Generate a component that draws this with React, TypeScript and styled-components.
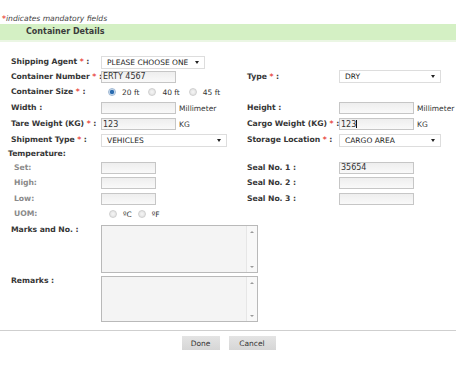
import styled, { createGlobalStyle } from "styled-components";

const GlobalStyle = createGlobalStyle`
  body {
    margin: 0;
    background: #ffffff;
    font-family: "DejaVu Sans", Verdana, sans-serif;
  }
`;

const Page = styled.div`
  width: 456px;
  padding: 13px 0px 0px 0px;
  color: #333333;
`;

const Note = styled.div`
  height: 11px;
  line-height: 11px;
  padding: 0px 0px 0px 2px;
  font-size: 7.6px;
  font-style: italic;
  color: #444444;
`;

const Star = styled.span`
  color: #e8463c;
  font-style: normal;
  font-weight: bold;
`;

const Header = styled.div`
  height: 16px;
  line-height: 16px;
  padding: 0px 0px 0px 26px;
  background-color: #d4f0c4;
  border-bottom: solid 2px #ebf6e4;
  font-size: 8px;
  font-weight: bold;
  color: #3b3b3b;
`;

const Form = styled.div`
  display: flex;
  flex-direction: column;
  margin: 13px 0px 0px 0px;
  padding: 0px 0px 0px 11px;
`;

const Row = styled.div<{ $h: number; $top?: boolean; $gap?: number }>`
  display: grid;
  grid-template-columns: 90px 146px 92px 1fr;
  align-items: ${(props) => (props.$top ? "start" : "center")};
  height: ${(props) => props.$h}px;
  margin: ${(props) => props.$gap ?? 0}px 0px 0px 0px;
`;

const Label = styled.div<{ $muted?: boolean; $shift?: number }>`
  font-size: 7.7px;
  line-height: 10px;
  font-weight: bold;
  letter-spacing: -0.05px;
  white-space: nowrap;
  color: ${(props) => (props.$muted ? "#8a8a8a" : "#363636")};
  margin: 0px 0px 0px ${(props) => props.$shift ?? 0}px;
`;

const Field = styled.div`
  display: flex;
  align-items: center;
  gap: 3px;
`;

const TextInput = styled.input<{ $w: number }>`
  box-sizing: border-box;
  width: ${(props) => props.$w}px;
  height: 12px;
  margin: 0px;
  padding: 0px 1px;
  border: solid 1px #c6c6c6;
  background: linear-gradient(#eeeeee, #f9f9f9);
  font-family: inherit;
  font-size: 8px;
  color: #333333;
  outline: none;
`;

const Unit = styled.span`
  font-size: 7.5px;
  color: #333333;
`;

const SelectBox = styled.div<{ $w: number }>`
  box-sizing: border-box;
  display: flex;
  align-items: center;
  justify-content: space-between;
  width: ${(props) => props.$w}px;
  height: 13px;
  padding: 0px 5px 0px 5px;
  border: solid 1px #dddddd;
  background-color: #ffffff;
  font-size: 7.5px;
  color: #222222;
`;

const Arrow = styled.span`
  width: 0px;
  height: 0px;
  border-left: solid 2.5px transparent;
  border-right: solid 2.5px transparent;
  border-top: solid 3px #222222;
`;

const RadioGroup = styled.div<{ $start: number }>`
  display: flex;
  align-items: center;
  margin: 0px 0px 0px ${(props) => props.$start}px;
`;

const Radio = styled.span<{ $checked?: boolean }>`
  box-sizing: border-box;
  width: 8px;
  height: 8px;
  border-radius: 50%;
  border: solid 1px ${(props) => (props.$checked ? "#9fb8d3" : "#d0d0d0")};
  background: ${(props) =>
    props.$checked
      ? "radial-gradient(circle, #2b6cb0 0px, #2b6cb0 1.8px, #cfe0f1 2.6px)"
      : "radial-gradient(circle, #f6f6f6 0px, #dedede 4px)"};
`;

const RadioText = styled.span<{ $gap: number }>`
  margin: 0px ${(props) => props.$gap}px 0px 6px;
  font-size: 7.5px;
  color: #333333;
`;

const TextArea = styled.div<{ $h: number }>`
  box-sizing: border-box;
  display: flex;
  justify-content: flex-end;
  width: 157px;
  height: ${(props) => props.$h}px;
  border: solid 1px #b9b9b9;
  background-color: #f4f4f4;
`;

const ScrollBar = styled.div`
  display: flex;
  flex-direction: column;
  justify-content: space-between;
  align-items: center;
  width: 10px;
  padding: 5px 0px 4px 0px;
  border-left: solid 1px #e6e6e6;
  background-color: #f8f8f8;
`;

const ScrollArrow = styled.span<{ $up?: boolean }>`
  width: 0px;
  height: 0px;
  border-left: solid 2px transparent;
  border-right: solid 2px transparent;
  border-${(props) => (props.$up ? "bottom" : "top")}: solid 2px #9a9a9a;
`;

const Caret = styled.span`
  display: inline-block;
  width: 1px;
  height: 8px;
  background-color: #111111;
`;

const FakeInput = styled.div<{ $w: number }>`
  box-sizing: border-box;
  display: flex;
  align-items: center;
  width: ${(props) => props.$w}px;
  height: 12px;
  padding: 0px 1px;
  border: solid 1px #c6c6c6;
  background: linear-gradient(#eeeeee, #f9f9f9);
  font-size: 8px;
  color: #333333;
`;

const Divider = styled.div`
  margin: 8px 0px 0px 0px;
  border-top: solid 1px #cfcfcf;
`;

const Buttons = styled.div`
  display: flex;
  justify-content: center;
  gap: 9px;
  margin: 5px 0px 0px 0px;
  padding: 0px 0px 0px 1px;
`;

const Button = styled.button<{ $w: number }>`
  width: ${(props) => props.$w}px;
  height: 14px;
  padding: 0px;
  border: none;
  background: linear-gradient(#e4e4e4, #d6d6d6);
  font-family: inherit;
  font-size: 7.5px;
  color: #333333;
`;

function Req({ text }: { text: string }) {
  return (
    <Label>
      {text} <Star>*</Star> :
    </Label>
  );
}

export default function App() {
  return (
    <Page>
      <GlobalStyle />
      <Note>
        <Star>*</Star>indicates mandatory fields
      </Note>
      <Header>Container Details</Header>
      <Form>
        <Row $h={14}>
          <Req text="Shipping Agent" />
          <Field>
            <SelectBox $w={104}>
              PLEASE CHOOSE ONE <Arrow />
            </SelectBox>
          </Field>
        </Row>
        <Row $h={15}>
          <Req text="Container Number" />
          <Field>
            <TextInput $w={75} readOnly value="ERTY 4567" />
          </Field>
          <Req text="Type" />
          <Field>
            <SelectBox $w={102}>
              DRY <Arrow />
            </SelectBox>
          </Field>
        </Row>
        <Row $h={16}>
          <Req text="Container Size" />
          <RadioGroup $start={7}>
            <Radio $checked />
            <RadioText $gap={9}>20 ft</RadioText>
            <Radio />
            <RadioText $gap={9}>40 ft</RadioText>
            <Radio />
            <RadioText $gap={0}>45 ft</RadioText>
          </RadioGroup>
        </Row>
        <Row $h={16}>
          <Label>Width :</Label>
          <Field>
            <TextInput $w={75} readOnly value="" />
            <Unit>Millimeter</Unit>
          </Field>
          <Label>Height :</Label>
          <Field>
            <TextInput $w={75} readOnly value="" />
            <Unit>Millimeter</Unit>
          </Field>
        </Row>
        <Row $h={16}>
          <Req text="Tare Weight (KG)" />
          <Field>
            <TextInput $w={75} readOnly value="123" />
            <Unit>KG</Unit>
          </Field>
          <Req text="Cargo Weight (KG)" />
          <Field>
            <FakeInput $w={75}>
              123
              <Caret />
            </FakeInput>
            <Unit>KG</Unit>
          </Field>
        </Row>
        <Row $h={16}>
          <Req text="Shipment Type" />
          <Field>
            <SelectBox $w={126}>
              VEHICLES <Arrow />
            </SelectBox>
          </Field>
          <Req text="Storage Location" />
          <Field>
            <SelectBox $w={102}>
              CARGO AREA <Arrow />
            </SelectBox>
          </Field>
        </Row>
        <Row $h={12}>
          <Label $shift={-3}>Temperature:</Label>
        </Row>
        <Row $h={15}>
          <Label $muted $shift={3}>
            Set:
          </Label>
          <Field>
            <TextInput $w={55} readOnly value="" />
          </Field>
          <Label>Seal No. 1 :</Label>
          <Field>
            <TextInput $w={75} readOnly value="35654" />
          </Field>
        </Row>
        <Row $h={16}>
          <Label $muted $shift={3}>
            High:
          </Label>
          <Field>
            <TextInput $w={55} readOnly value="" />
          </Field>
          <Label>Seal No. 2 :</Label>
          <Field>
            <TextInput $w={75} readOnly value="" />
          </Field>
        </Row>
        <Row $h={16}>
          <Label $muted $shift={3}>
            Low:
          </Label>
          <Field>
            <TextInput $w={55} readOnly value="" />
          </Field>
          <Label>Seal No. 3 :</Label>
          <Field>
            <TextInput $w={75} readOnly value="" />
          </Field>
        </Row>
        <Row $h={14}>
          <Label $muted $shift={3}>
            UOM:
          </Label>
          <RadioGroup $start={8}>
            <Radio />
            <RadioText $gap={6}>ºC</RadioText>
            <Radio />
            <RadioText $gap={0}>ºF</RadioText>
          </RadioGroup>
        </Row>
        <Row $h={48} $top $gap={4}>
          <Label>Marks and No. :</Label>
          <TextArea $h={48}>
            <ScrollBar>
              <ScrollArrow $up />
              <ScrollArrow />
            </ScrollBar>
          </TextArea>
        </Row>
        <Row $h={46} $top $gap={3}>
          <Label>Remarks :</Label>
          <TextArea $h={46}>
            <ScrollBar>
              <ScrollArrow $up />
              <ScrollArrow />
            </ScrollBar>
          </TextArea>
        </Row>
      </Form>
      <Divider />
      <Buttons>
        <Button $w={38}>Done</Button>
        <Button $w={47}>Cancel</Button>
      </Buttons>
    </Page>
  );
}
